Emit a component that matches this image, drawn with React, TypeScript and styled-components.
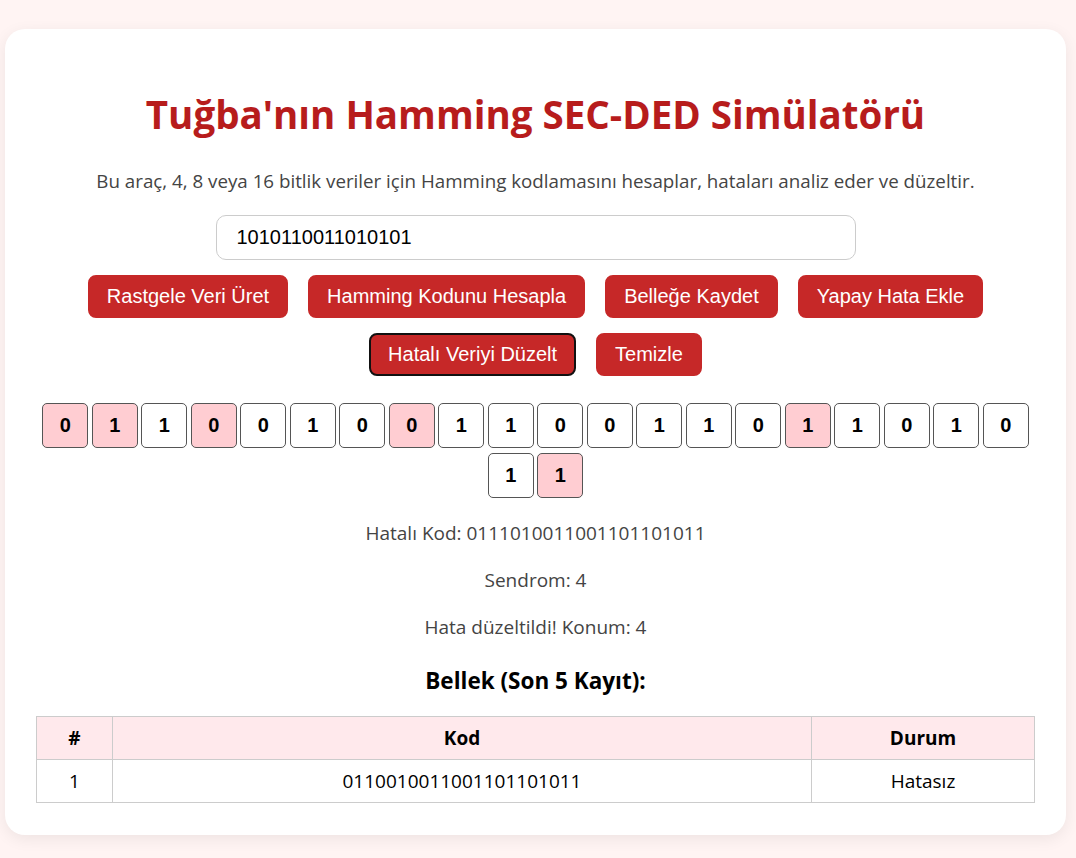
import React from 'react';
import styled, {createGlobalStyle} from 'styled-components';

const GlobalStyle = createGlobalStyle`
  html, body {
    margin: 0;
    padding: 0;
    background: #fff4f3;
  }
  body {
    font-family: 'Open Sans', 'Noto Sans', sans-serif;
    color: #444;
  }
`;

const Page = styled.div`
  padding: 29px 10px 24px 5px;
`;

const Card = styled.div`
  background: #fff;
  border-radius: 20px;
  box-shadow: 0 4px 16px rgba(0, 0, 0, 0.07);
  padding: 31px 31px 32px;
  display: flex;
  flex-direction: column;
  align-items: center;
`;

const Title = styled.h1`
  margin: 28px 0 0;
  font-size: 38.5px;
  line-height: 53px;
  font-weight: 700;
  color: #b71c1c;
  text-align: center;
`;

const Subtitle = styled.p`
  margin: 26px 0 21px;
  font-size: 18.75px;
  line-height: 27px;
  text-align: center;
`;

const DataInput = styled.input`
  width: 640px;
  height: 45px;
  box-sizing: border-box;
  border: 1px solid #ccc;
  border-radius: 10px;
  padding: 0 20px;
  font-family: 'Liberation Sans', Arial, sans-serif;
  font-size: 20px;
  color: #000;
  outline: none;
`;

const ButtonRow = styled.div<{$top: number}>`
  display: flex;
  justify-content: center;
  gap: 20px;
  margin-top: ${(p) => p.$top}px;
`;

const ActionButton = styled.button<{$focused?: boolean}>`
  background: #c62828;
  color: #fff;
  border: 2px solid ${(p) => (p.$focused ? '#111' : '#c62828')};
  border-radius: 8px;
  height: 43px;
  padding: 0 17px;
  font-family: 'Liberation Sans', Arial, sans-serif;
  font-size: 20px;
  cursor: pointer;
`;

const BitGrid = styled.div`
  display: flex;
  flex-wrap: wrap;
  justify-content: center;
  width: 990px;
  margin-top: 24px;
`;

const Bit = styled.div<{$parity: boolean}>`
  width: 46px;
  height: 45px;
  box-sizing: border-box;
  margin: 2.5px 1.75px;
  border: 1px solid #555;
  border-radius: 5px;
  background: ${(p) => (p.$parity ? '#ffcdd2' : '#fff')};
  display: flex;
  align-items: center;
  justify-content: center;
  font-family: 'Liberation Sans', Arial, sans-serif;
  font-weight: 700;
  font-size: 20px;
  color: #000;
`;

const Info = styled.p`
  margin: 20px 0 0;
  font-size: 19px;
  line-height: 27px;
  text-align: center;
  &:first-of-type {
    margin-top: 24px;
  }
`;

const SectionTitle = styled.h3`
  margin: 24px 0 20px;
  font-size: 22.5px;
  line-height: 31px;
  font-weight: 700;
  color: #000;
`;

const Table = styled.table`
  width: 100%;
  table-layout: fixed;
  border-collapse: collapse;
  font-size: 19px;
  color: #000;
`;

const HeadCell = styled.th<{$width?: number}>`
  width: ${(p) => (p.$width ? `${p.$width}px` : 'auto')};
  background: #ffe9ec;
  border: 1px solid #ccc;
  padding: 8px;
  line-height: 26px;
  font-weight: 700;
`;

const Cell = styled.td`
  border: 1px solid #ccc;
  padding: 8px;
  line-height: 26px;
  text-align: center;
`;

const bits = '0110010011001101101011';
const parityPositions = [1, 2, 4, 8, 16, 22];

export default function App() {
  return (
    <>
      <GlobalStyle />
      <Page>
        <Card>
          <Title>Tuğba'nın Hamming SEC-DED Simülatörü</Title>
          <Subtitle>
            Bu araç, 4, 8 veya 16 bitlik veriler için Hamming kodlamasını hesaplar, hataları analiz eder ve düzeltir.
          </Subtitle>
          <DataInput defaultValue="1010110011010101" />

          <ButtonRow $top={15}>
            <ActionButton>Rastgele Veri Üret</ActionButton>
            <ActionButton>Hamming Kodunu Hesapla</ActionButton>
            <ActionButton>Belleğe Kaydet</ActionButton>
            <ActionButton>Yapay Hata Ekle</ActionButton>
          </ButtonRow>
          <ButtonRow $top={15}>
            <ActionButton $focused>Hatalı Veriyi Düzelt</ActionButton>
            <ActionButton>Temizle</ActionButton>
          </ButtonRow>

          <BitGrid>
            {bits.split('').map((b, i) => (
              <Bit key={i} $parity={parityPositions.includes(i + 1)}>
                {b}
              </Bit>
            ))}
          </BitGrid>

          <Info>Hatalı Kod: 0111010011001101101011</Info>
          <Info>Sendrom: 4</Info>
          <Info>Hata düzeltildi! Konum: 4</Info>

          <SectionTitle>Bellek (Son 5 Kayıt):</SectionTitle>
          <Table>
            <thead>
              <tr>
                <HeadCell $width={59}>#</HeadCell>
                <HeadCell>Kod</HeadCell>
                <HeadCell $width={206}>Durum</HeadCell>
              </tr>
            </thead>
            <tbody>
              <tr>
                <Cell>1</Cell>
                <Cell>0110010011001101101011</Cell>
                <Cell>Hatasız</Cell>
              </tr>
            </tbody>
          </Table>
        </Card>
      </Page>
    </>
  );
}
